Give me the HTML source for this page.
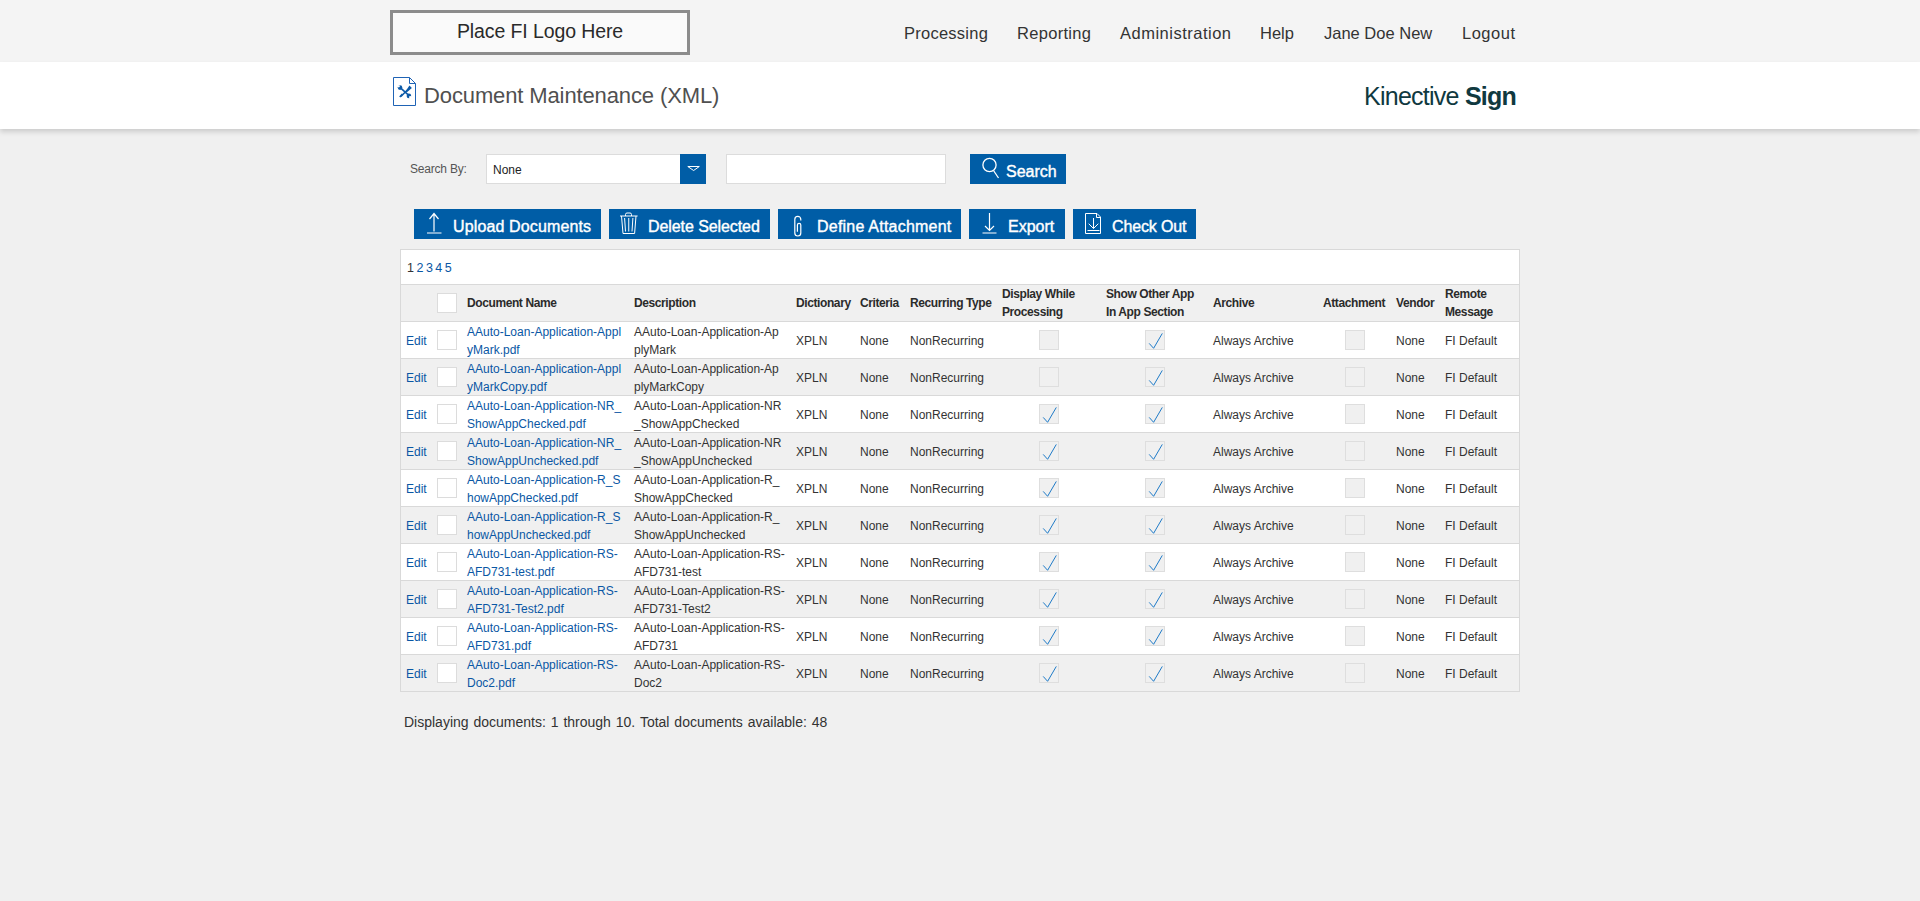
<!DOCTYPE html>
<html><head><meta charset="utf-8"><title>Document Maintenance (XML)</title>
<style>
*{box-sizing:border-box}
html,body{margin:0;padding:0}
body{width:1920px;height:901px;overflow:hidden;background:#f0f0f0;font-family:"Liberation Sans",sans-serif;color:#333;position:relative}
.abs{position:absolute}
.topbar{position:absolute;left:0;top:0;width:1920px;height:62px;background:#f4f4f4}
.logo{position:absolute;left:390px;top:10px;width:300px;height:45px;border:3px solid #8c8c8c;background:#fafafa;font-size:19.5px;color:#2a2a2a;text-align:center;line-height:37px;letter-spacing:-0.1px}
.nav{position:absolute;top:23px;font-size:16.5px;color:#333;white-space:nowrap;line-height:20px}
.band{position:absolute;left:0;top:62px;width:1920px;height:67px;background:#fff;box-shadow:0 3px 5px rgba(0,0,0,.15)}
.title{position:absolute;left:424px;top:83px;font-size:22px;color:#505050;white-space:nowrap;line-height:26px;letter-spacing:-0.12px}
.brand{position:absolute;left:1364px;top:81px;font-size:25px;color:#10393f;white-space:nowrap;line-height:30px;letter-spacing:-0.75px}
.brand b{font-weight:700}
.lbl{position:absolute;left:410px;top:161px;font-size:12px;color:#555;line-height:16px;letter-spacing:-0.2px}
.sel{position:absolute;left:486px;top:154px;width:220px;height:30px;background:#fff;border:1px solid #dcdcdc}
.sel span{position:absolute;left:6px;top:7px;font-size:12px;color:#222;line-height:16px}
.sel .dd{position:absolute;right:-1px;top:-1px;width:26px;height:30px;background:#005da6}
.inp{position:absolute;left:726px;top:154px;width:220px;height:30px;background:#fff;border:1px solid #dcdcdc}
.btn{position:absolute;top:209px;height:30px;background:#005da6;color:#fff;font-weight:400;font-size:16px;line-height:20px;white-space:nowrap;-webkit-text-stroke:0.4px #fff}
.btn span{position:absolute;top:8px}
.btn svg{position:absolute;left:0;top:0}
.grid{position:absolute;left:400px;top:249px;width:1120px;height:443px;background:#fff;border:1px solid #d9d9d9}
.pager{position:absolute;left:6px;top:10px;font-size:12.5px;line-height:16px;color:#333;word-spacing:-1px}
.pager a{color:#0a57a4;text-decoration:none}
.row{position:absolute;left:0;width:1118px;height:37px;border-top:1px solid #d9d9d9}
.row.g{background:#f0f0f0}
.c{position:absolute;top:0;height:36px;display:flex;align-items:center;font-size:12px;line-height:18px;white-space:nowrap}
.hd .c{font-weight:700;letter-spacing:-0.4px;color:#2b2b2b}
.lk{color:#0a57a4}
.cb{position:absolute;width:20px;height:20px;top:8px;border:1px solid #dcdcdc;background:#fff}
.cbd{position:absolute;width:20px;height:20px;top:8px;border:1px solid #dedede;background:#f0f0f0}
.ck{position:absolute;left:-1px;top:-1px}
.row.d .c{top:1px}
.foot{position:absolute;left:404px;top:713px;font-size:14px;line-height:18px;color:#333;word-spacing:1px}
</style></head>
<body>
<div class="topbar">
  <div class="logo">Place FI Logo Here</div>
  <div class="nav" style="left:904px;letter-spacing:0.25px">Processing</div>
  <div class="nav" style="left:1017px;letter-spacing:0.3px">Reporting</div>
  <div class="nav" style="left:1120px;letter-spacing:0.5px">Administration</div>
  <div class="nav" style="left:1260px">Help</div>
  <div class="nav" style="left:1324px">Jane Doe New</div>
  <div class="nav" style="left:1462px;letter-spacing:0.5px">Logout</div>
</div>
<div class="band"></div>
<svg class="abs" style="left:392px;top:76px" width="26" height="32" viewBox="0 0 26 32">
  <path d="M1.5 1.5 H17.5 L23.5 7.5 V29.5 H1.5 Z" fill="none" stroke="#1f63b5" stroke-width="1"/>
  <path d="M17.5 1.5 V7.5 H23.5" fill="none" stroke="#1f63b5" stroke-width="1"/>
  <g fill="#0c5aa8" stroke="none">
    <path d="M7.6 12.2 L16.9 20.6 L18.1 19.4 L8.8 11 Z"/>
    <circle cx="8" cy="11.6" r="2.3"/>
    <circle cx="16.9" cy="19.9" r="2.3"/>
    <path d="M17.9 10.4 L19.1 11.6 L9.4 21.1 L8.2 19.9 Z"/>
    <path d="M17.4 9.6 L19.9 12.1 L14.6 16.4 L13.6 15.4 Z"/>
    <path d="M9.8 17.4 L11 18.6 L8.4 21.6 L7.2 20.4 Z"/>
  </g>
  <g fill="#fff"><circle cx="6.7" cy="10.3" r="1.15"/><circle cx="18.2" cy="21.2" r="1.15"/></g>
</svg>
<div class="title">Document Maintenance (XML)</div>
<div class="brand">Kinective <b>Sign</b></div>
<div class="lbl">Search By:</div>
<div class="sel"><span>None</span><div class="dd"><svg width="26" height="30"><path d="M7.8 12.5 H19.3 L13.6 16.5 Z" fill="none" stroke="#fff" stroke-width="1"/></svg></div></div>
<div class="inp"></div>
<div class="btn" style="left:970px;width:96px;top:154px"><svg width="96" height="30"><circle cx="19.5" cy="11" r="6.6" fill="none" stroke="#fff" stroke-width="1.3"/><path d="M23.5 16.5 L28.5 24" stroke="#fff" stroke-width="1.3"/></svg><span style="left:36px">Search</span></div>
<div class="btn" style="left:414px;width:187px"><svg width="187" height="30"><path d="M20 4.5 V22.5 M15.5 10 L20 4.5 L24.5 10 M13 24 H27.5" stroke="#fff" stroke-width="1.2" fill="none"/></svg><span style="left:39px;letter-spacing:0.13px">Upload Documents</span></div>
<div class="btn" style="left:609px;width:161px"><svg width="161" height="30"><path d="M11 7 H28.6 M16.5 7 V5.5 Q16.5 4 18 4 H21 Q22.5 4 22.5 5.5 V7 M12.5 7 L14 24.5 H25.6 L27 7 M15.6 9 L16.5 22.5 M19.75 9 V22.5 M23.9 9 L23 22.5" stroke="#fff" stroke-width="1" fill="none"/></svg><span style="left:39px;letter-spacing:-0.08px">Delete Selected</span></div>
<div class="btn" style="left:778px;width:183px"><svg width="183" height="30"><path d="M22.8 11.6 V10.4 A3 3 0 0 0 16.8 10.4 V24 A3 3 0 0 0 22.8 24 V16.1 A1.7 1.7 0 0 0 19.4 16.1 V22.8" stroke="#fff" stroke-width="1.2" fill="none"/></svg><span style="left:39px;letter-spacing:0.22px">Define Attachment</span></div>
<div class="btn" style="left:969px;width:96px"><svg width="96" height="30"><path d="M20.5 4 V21.5 M16 17 L20.5 21.5 L25 17 M13.5 24 H27.5" stroke="#fff" stroke-width="1.2" fill="none"/></svg><span style="left:39px;letter-spacing:0px">Export</span></div>
<div class="btn" style="left:1073px;width:123px"><svg width="123" height="30"><path d="M12.5 4.5 H24 L27.5 8 V24.5 H12.5 Z M23.5 4.5 V8.5 H27.5 M20.5 9 V19.5 M15.7 14.7 L20.5 19.5 L25.3 14.7 M14.5 21.5 H26.5" stroke="#fff" stroke-width="1" fill="none"/></svg><span style="left:39px;letter-spacing:-0.15px">Check Out</span></div>
<div class="grid">
<div class="pager">1 <a>2</a> <a>3</a> <a>4</a> <a>5</a></div>
<div class="row g hd" style="top:34px"><div class="cb" style="left:36px"></div><div class="c" style="left:66px"><div>Document Name</div></div><div class="c" style="left:233px"><div>Description</div></div><div class="c" style="left:395px"><div>Dictionary</div></div><div class="c" style="left:459px"><div>Criteria</div></div><div class="c" style="left:509px"><div>Recurring Type</div></div><div class="c" style="left:601px"><div>Display While<br>Processing</div></div><div class="c" style="left:705px"><div>Show Other App<br>In App Section</div></div><div class="c" style="left:812px"><div>Archive</div></div><div class="c" style="left:922px"><div>Attachment</div></div><div class="c" style="left:995px"><div>Vendor</div></div><div class="c" style="left:1044px"><div>Remote<br>Message</div></div></div>
<div class="row d" style="top:71px"><div class="c lk" style="left:5px">Edit</div><div class="cb" style="left:36px"></div><div class="c lk" style="left:66px"><div>AAuto-Loan-Application-Appl<br>yMark.pdf</div></div><div class="c" style="left:233px"><div>AAuto-Loan-Application-Ap<br>plyMark</div></div><div class="c" style="left:395px">XPLN</div><div class="c" style="left:459px">None</div><div class="c" style="left:509px">NonRecurring</div><div class="cbd" style="left:638px"></div><div class="cbd" style="left:744px"><svg class="ck" width="20" height="20" viewBox="0 0 20 20"><path d="M4.2 13.4 L8.6 18.3 L17.3 3.4" fill="none" stroke="#1f7bc8" stroke-width="1"/></svg></div><div class="c" style="left:812px">Always Archive</div><div class="cbd" style="left:944px"></div><div class="c" style="left:995px">None</div><div class="c" style="left:1044px">FI Default</div></div>
<div class="row d g" style="top:108px"><div class="c lk" style="left:5px">Edit</div><div class="cb" style="left:36px"></div><div class="c lk" style="left:66px"><div>AAuto-Loan-Application-Appl<br>yMarkCopy.pdf</div></div><div class="c" style="left:233px"><div>AAuto-Loan-Application-Ap<br>plyMarkCopy</div></div><div class="c" style="left:395px">XPLN</div><div class="c" style="left:459px">None</div><div class="c" style="left:509px">NonRecurring</div><div class="cbd" style="left:638px"></div><div class="cbd" style="left:744px"><svg class="ck" width="20" height="20" viewBox="0 0 20 20"><path d="M4.2 13.4 L8.6 18.3 L17.3 3.4" fill="none" stroke="#1f7bc8" stroke-width="1"/></svg></div><div class="c" style="left:812px">Always Archive</div><div class="cbd" style="left:944px"></div><div class="c" style="left:995px">None</div><div class="c" style="left:1044px">FI Default</div></div>
<div class="row d" style="top:145px"><div class="c lk" style="left:5px">Edit</div><div class="cb" style="left:36px"></div><div class="c lk" style="left:66px"><div>AAuto-Loan-Application-NR_<br>ShowAppChecked.pdf</div></div><div class="c" style="left:233px"><div>AAuto-Loan-Application-NR<br>_ShowAppChecked</div></div><div class="c" style="left:395px">XPLN</div><div class="c" style="left:459px">None</div><div class="c" style="left:509px">NonRecurring</div><div class="cbd" style="left:638px"><svg class="ck" width="20" height="20" viewBox="0 0 20 20"><path d="M4.2 13.4 L8.6 18.3 L17.3 3.4" fill="none" stroke="#1f7bc8" stroke-width="1"/></svg></div><div class="cbd" style="left:744px"><svg class="ck" width="20" height="20" viewBox="0 0 20 20"><path d="M4.2 13.4 L8.6 18.3 L17.3 3.4" fill="none" stroke="#1f7bc8" stroke-width="1"/></svg></div><div class="c" style="left:812px">Always Archive</div><div class="cbd" style="left:944px"></div><div class="c" style="left:995px">None</div><div class="c" style="left:1044px">FI Default</div></div>
<div class="row d g" style="top:182px"><div class="c lk" style="left:5px">Edit</div><div class="cb" style="left:36px"></div><div class="c lk" style="left:66px"><div>AAuto-Loan-Application-NR_<br>ShowAppUnchecked.pdf</div></div><div class="c" style="left:233px"><div>AAuto-Loan-Application-NR<br>_ShowAppUnchecked</div></div><div class="c" style="left:395px">XPLN</div><div class="c" style="left:459px">None</div><div class="c" style="left:509px">NonRecurring</div><div class="cbd" style="left:638px"><svg class="ck" width="20" height="20" viewBox="0 0 20 20"><path d="M4.2 13.4 L8.6 18.3 L17.3 3.4" fill="none" stroke="#1f7bc8" stroke-width="1"/></svg></div><div class="cbd" style="left:744px"><svg class="ck" width="20" height="20" viewBox="0 0 20 20"><path d="M4.2 13.4 L8.6 18.3 L17.3 3.4" fill="none" stroke="#1f7bc8" stroke-width="1"/></svg></div><div class="c" style="left:812px">Always Archive</div><div class="cbd" style="left:944px"></div><div class="c" style="left:995px">None</div><div class="c" style="left:1044px">FI Default</div></div>
<div class="row d" style="top:219px"><div class="c lk" style="left:5px">Edit</div><div class="cb" style="left:36px"></div><div class="c lk" style="left:66px"><div>AAuto-Loan-Application-R_S<br>howAppChecked.pdf</div></div><div class="c" style="left:233px"><div>AAuto-Loan-Application-R_<br>ShowAppChecked</div></div><div class="c" style="left:395px">XPLN</div><div class="c" style="left:459px">None</div><div class="c" style="left:509px">NonRecurring</div><div class="cbd" style="left:638px"><svg class="ck" width="20" height="20" viewBox="0 0 20 20"><path d="M4.2 13.4 L8.6 18.3 L17.3 3.4" fill="none" stroke="#1f7bc8" stroke-width="1"/></svg></div><div class="cbd" style="left:744px"><svg class="ck" width="20" height="20" viewBox="0 0 20 20"><path d="M4.2 13.4 L8.6 18.3 L17.3 3.4" fill="none" stroke="#1f7bc8" stroke-width="1"/></svg></div><div class="c" style="left:812px">Always Archive</div><div class="cbd" style="left:944px"></div><div class="c" style="left:995px">None</div><div class="c" style="left:1044px">FI Default</div></div>
<div class="row d g" style="top:256px"><div class="c lk" style="left:5px">Edit</div><div class="cb" style="left:36px"></div><div class="c lk" style="left:66px"><div>AAuto-Loan-Application-R_S<br>howAppUnchecked.pdf</div></div><div class="c" style="left:233px"><div>AAuto-Loan-Application-R_<br>ShowAppUnchecked</div></div><div class="c" style="left:395px">XPLN</div><div class="c" style="left:459px">None</div><div class="c" style="left:509px">NonRecurring</div><div class="cbd" style="left:638px"><svg class="ck" width="20" height="20" viewBox="0 0 20 20"><path d="M4.2 13.4 L8.6 18.3 L17.3 3.4" fill="none" stroke="#1f7bc8" stroke-width="1"/></svg></div><div class="cbd" style="left:744px"><svg class="ck" width="20" height="20" viewBox="0 0 20 20"><path d="M4.2 13.4 L8.6 18.3 L17.3 3.4" fill="none" stroke="#1f7bc8" stroke-width="1"/></svg></div><div class="c" style="left:812px">Always Archive</div><div class="cbd" style="left:944px"></div><div class="c" style="left:995px">None</div><div class="c" style="left:1044px">FI Default</div></div>
<div class="row d" style="top:293px"><div class="c lk" style="left:5px">Edit</div><div class="cb" style="left:36px"></div><div class="c lk" style="left:66px"><div>AAuto-Loan-Application-RS-<br>AFD731-test.pdf</div></div><div class="c" style="left:233px"><div>AAuto-Loan-Application-RS-<br>AFD731-test</div></div><div class="c" style="left:395px">XPLN</div><div class="c" style="left:459px">None</div><div class="c" style="left:509px">NonRecurring</div><div class="cbd" style="left:638px"><svg class="ck" width="20" height="20" viewBox="0 0 20 20"><path d="M4.2 13.4 L8.6 18.3 L17.3 3.4" fill="none" stroke="#1f7bc8" stroke-width="1"/></svg></div><div class="cbd" style="left:744px"><svg class="ck" width="20" height="20" viewBox="0 0 20 20"><path d="M4.2 13.4 L8.6 18.3 L17.3 3.4" fill="none" stroke="#1f7bc8" stroke-width="1"/></svg></div><div class="c" style="left:812px">Always Archive</div><div class="cbd" style="left:944px"></div><div class="c" style="left:995px">None</div><div class="c" style="left:1044px">FI Default</div></div>
<div class="row d g" style="top:330px"><div class="c lk" style="left:5px">Edit</div><div class="cb" style="left:36px"></div><div class="c lk" style="left:66px"><div>AAuto-Loan-Application-RS-<br>AFD731-Test2.pdf</div></div><div class="c" style="left:233px"><div>AAuto-Loan-Application-RS-<br>AFD731-Test2</div></div><div class="c" style="left:395px">XPLN</div><div class="c" style="left:459px">None</div><div class="c" style="left:509px">NonRecurring</div><div class="cbd" style="left:638px"><svg class="ck" width="20" height="20" viewBox="0 0 20 20"><path d="M4.2 13.4 L8.6 18.3 L17.3 3.4" fill="none" stroke="#1f7bc8" stroke-width="1"/></svg></div><div class="cbd" style="left:744px"><svg class="ck" width="20" height="20" viewBox="0 0 20 20"><path d="M4.2 13.4 L8.6 18.3 L17.3 3.4" fill="none" stroke="#1f7bc8" stroke-width="1"/></svg></div><div class="c" style="left:812px">Always Archive</div><div class="cbd" style="left:944px"></div><div class="c" style="left:995px">None</div><div class="c" style="left:1044px">FI Default</div></div>
<div class="row d" style="top:367px"><div class="c lk" style="left:5px">Edit</div><div class="cb" style="left:36px"></div><div class="c lk" style="left:66px"><div>AAuto-Loan-Application-RS-<br>AFD731.pdf</div></div><div class="c" style="left:233px"><div>AAuto-Loan-Application-RS-<br>AFD731</div></div><div class="c" style="left:395px">XPLN</div><div class="c" style="left:459px">None</div><div class="c" style="left:509px">NonRecurring</div><div class="cbd" style="left:638px"><svg class="ck" width="20" height="20" viewBox="0 0 20 20"><path d="M4.2 13.4 L8.6 18.3 L17.3 3.4" fill="none" stroke="#1f7bc8" stroke-width="1"/></svg></div><div class="cbd" style="left:744px"><svg class="ck" width="20" height="20" viewBox="0 0 20 20"><path d="M4.2 13.4 L8.6 18.3 L17.3 3.4" fill="none" stroke="#1f7bc8" stroke-width="1"/></svg></div><div class="c" style="left:812px">Always Archive</div><div class="cbd" style="left:944px"></div><div class="c" style="left:995px">None</div><div class="c" style="left:1044px">FI Default</div></div>
<div class="row d g" style="top:404px"><div class="c lk" style="left:5px">Edit</div><div class="cb" style="left:36px"></div><div class="c lk" style="left:66px"><div>AAuto-Loan-Application-RS-<br>Doc2.pdf</div></div><div class="c" style="left:233px"><div>AAuto-Loan-Application-RS-<br>Doc2</div></div><div class="c" style="left:395px">XPLN</div><div class="c" style="left:459px">None</div><div class="c" style="left:509px">NonRecurring</div><div class="cbd" style="left:638px"><svg class="ck" width="20" height="20" viewBox="0 0 20 20"><path d="M4.2 13.4 L8.6 18.3 L17.3 3.4" fill="none" stroke="#1f7bc8" stroke-width="1"/></svg></div><div class="cbd" style="left:744px"><svg class="ck" width="20" height="20" viewBox="0 0 20 20"><path d="M4.2 13.4 L8.6 18.3 L17.3 3.4" fill="none" stroke="#1f7bc8" stroke-width="1"/></svg></div><div class="c" style="left:812px">Always Archive</div><div class="cbd" style="left:944px"></div><div class="c" style="left:995px">None</div><div class="c" style="left:1044px">FI Default</div></div>
</div>
<div class="foot">Displaying documents: 1 through 10. Total documents available: 48</div>
</body></html>
